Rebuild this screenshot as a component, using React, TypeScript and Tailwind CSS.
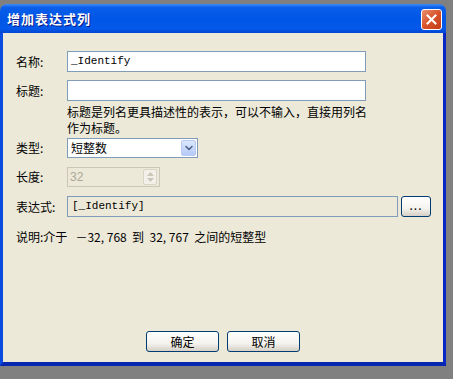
import { ChevronDown } from "lucide-react";

const cjk = "font-['SimSun','Noto_Sans_CJK_SC','Liberation_Sans',sans-serif]";
const mono = "font-['Liberation_Mono','Noto_Sans_CJK_SC',monospace]";

// XP 风格的按钮
const XpButton = ({ label, className }: { label: string; className?: string }) => (
  <button
    className={`h-[21px] rounded-[3px] border border-[#003C74] bg-[linear-gradient(to_bottom,#FFFFFF_0%,#F4F3EE_60%,#D6D0C5_100%)] text-[12px] leading-none text-black ${cjk} ${className ?? ""}`}
  >
    {label}
  </button>
);

const Label = ({ text }: { text: string }) => (
  <div className={`w-[64px] shrink-0 pl-[13px] whitespace-nowrap text-[12px] leading-none text-black ${cjk}`}>{text}</div>
);

export default function App() {
  return (
    <div className="w-[453px] h-[379px] bg-[#808080] pt-[4px] overflow-hidden">
      <div className="w-[446px] flex flex-col">
        {/* 标题栏 */}
        <div className="h-[29px] rounded-t-[7px] bg-[linear-gradient(to_bottom,#3C8CF8_0%,#0A5EEB_12%,#0056E6_50%,#0459EA_85%,#0345D2_100%)] flex items-center justify-between pl-[7px] pr-[4px]">
          <span className={`text-white text-[13px] font-bold tracking-[1px] [text-shadow:1px_1px_0_#0A1A8A] ${cjk}`}>
            增加表达式列
          </span>
          <div className="w-[21px] h-[21px] rounded-[3px] border border-white bg-[linear-gradient(135deg,#E9906F_0%,#D8532C_50%,#C23A17_100%)] flex items-center justify-center mt-[1px]">
            <svg width="11" height="11" viewBox="0 0 11 11">
              <path d="M1.5 1.5 L9.5 9.5 M9.5 1.5 L1.5 9.5" stroke="white" strokeWidth="2" strokeLinecap="square" />
            </svg>
          </div>
        </div>

        {/* 内容 */}
        <div className="h-[333px] bg-[#ECE9D8] border-l-[3px] border-r-[3px] border-b-[4px] border-l-[#0A4BE0] border-r-[#0626C6] border-b-[#0726B0] flex flex-col pt-[18px]">
          <div className="flex items-center h-[21px]">
            <Label text="名称:" />
            <div className={`w-[299px] h-[21px] bg-white border border-[#7F9DB9] flex items-center pl-[3px] text-[11px] text-black ${mono}`}>
              _Identify
            </div>
          </div>

          <div className="flex items-center h-[21px] mt-[8px]">
            <Label text="标题:" />
            <div className="w-[299px] h-[21px] bg-white border border-[#7F9DB9]" />
          </div>

          <div className={`ml-[64px] mt-[3px] text-[12px] leading-[16px] text-black ${cjk}`}>
            标题是列名更具描述性的表示，可以不输入，直接用列名
            <br />
            作为标题。
          </div>

          <div className="flex items-center h-[20px] mt-[2px]">
            <Label text="类型:" />
            <div className="w-[131px] h-[20px] bg-white border border-[#7F9DB9] flex items-center justify-between pl-[3px] pr-[1px]">
              <span className={`text-[12px] text-black ${cjk}`}>短整数</span>
              <div className="w-[15px] h-[16px] rounded-[2px] border border-[#B9CBF3] bg-[linear-gradient(to_bottom,#DCE7FD,#B6CAF8)] flex items-center justify-center">
                <ChevronDown size={12} strokeWidth={3} className="text-[#4D6185]" />
              </div>
            </div>
          </div>

          <div className="flex items-center h-[20px] mt-[9px]">
            <Label text="长度:" />
            <div className="w-[93px] h-[20px] bg-[#ECE9D8] border border-[#C9C7BA] flex items-center justify-between pl-[2px] pr-[2px]">
              <span className="text-[12px] text-[#ACA899] font-['Liberation_Sans',sans-serif]">32</span>
              <div className="w-[14px] h-[16px] rounded-[2px] border border-[#D8D4C6] bg-[#F2F0E8] flex flex-col items-center justify-center gap-[2px]">
                <svg width="7" height="4" viewBox="0 0 7 4"><path d="M0 4 L3.5 0 L7 4 Z" fill="#C9C7BA" /></svg>
                <svg width="7" height="4" viewBox="0 0 7 4"><path d="M0 0 L3.5 4 L7 0 Z" fill="#C9C7BA" /></svg>
              </div>
            </div>
          </div>

          <div className="flex items-center h-[21px] mt-[9px]">
            <Label text="表达式:" />
            <div className={`w-[331px] h-[21px] bg-[#ECE9D8] border border-[#7F9DB9] flex items-center pl-[4px] text-[11px] text-black ${mono}`}>
              [_Identify]
            </div>
            <XpButton label="..." className="w-[30px] ml-[3px] text-[#555] tracking-[1px] pb-[3px]" />
          </div>

          <div className={`pl-[13px] mt-[12px] text-[12px] leading-[16px] text-black ${cjk}`}>
            说明:介于&nbsp;&nbsp;&nbsp;－32, 768&nbsp; 到&nbsp; 32, 767&nbsp; 之间的短整型
          </div>

          <div className="mt-auto mb-[10px] flex gap-[8px] pl-[143px]">
            <XpButton label="确定" className="w-[73px]" />
            <XpButton label="取消" className="w-[73px]" />
          </div>
        </div>
      </div>
    </div>
  );
}
